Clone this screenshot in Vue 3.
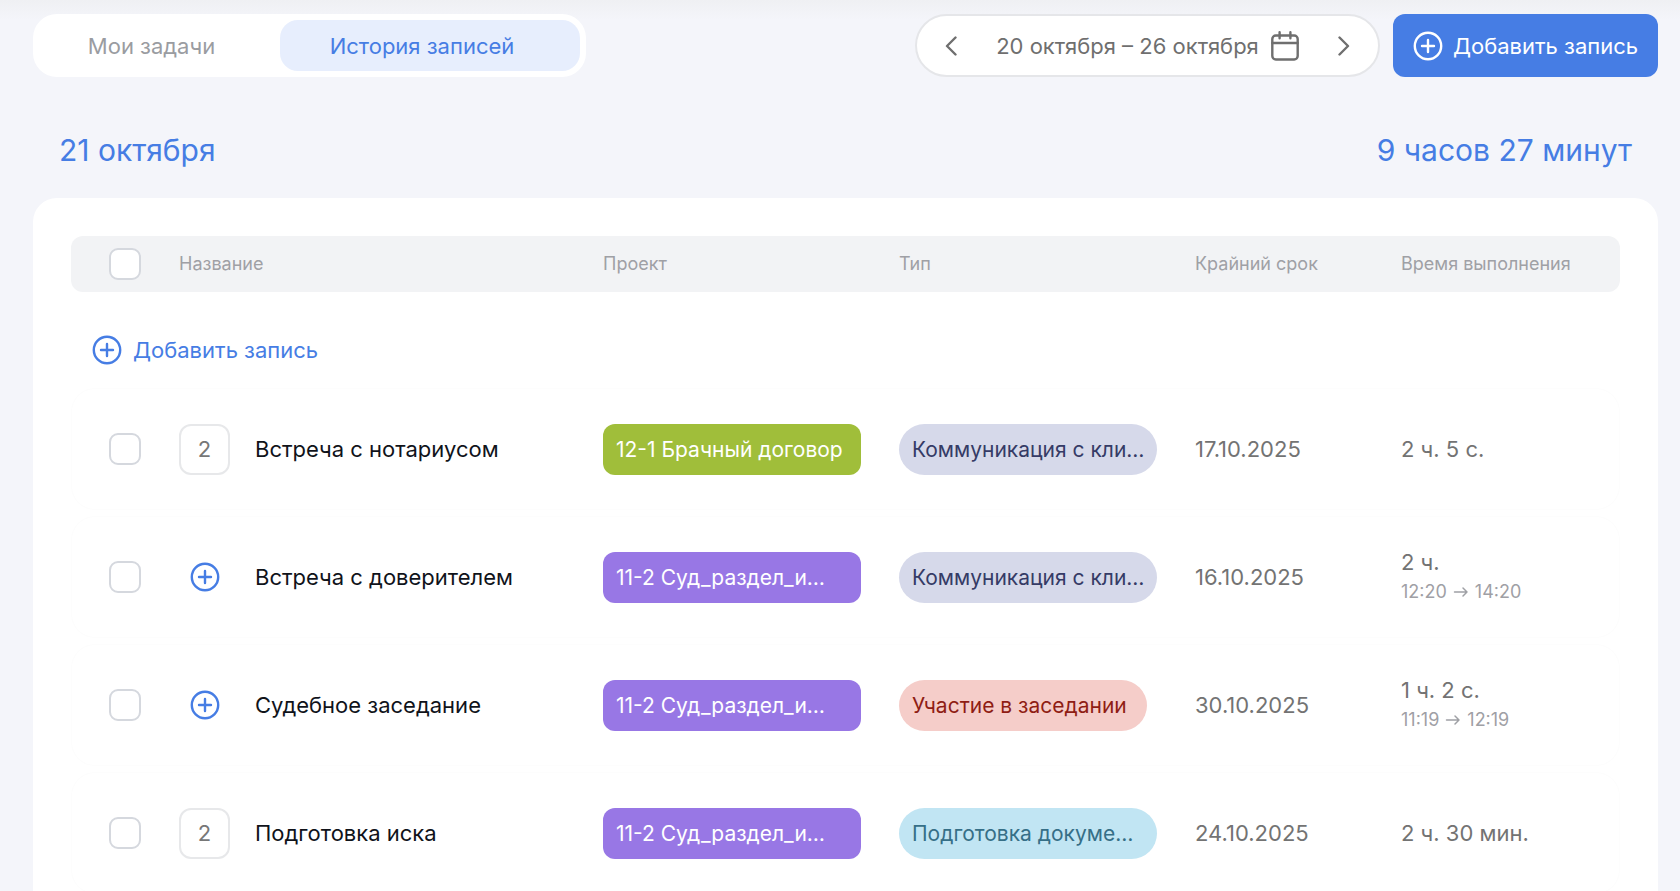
<script setup>
import { h } from 'vue'

const PlusCircle = () =>
  h('svg', { class: 'plus', viewBox: '0 0 30 30', width: 30, height: 30, fill: 'none', stroke: 'currentColor', 'stroke-width': 2.4, 'stroke-linecap': 'round', 'aria-hidden': 'true' }, [
    h('circle', { cx: 15, cy: 15, r: 13.2 }),
    h('path', { d: 'M15 9v12M9 15h12' })
  ])

const rows = [
  { id: 1, name: 'Встреча с нотариусом', count: 2, project: '12-1 Брачный договор', color: 'green', projectWide: true, type: 'Коммуникация с кли…', tone: 'indigo', typeWide: true, due: '17.10.2025', time: '2 ч. 5 с.' },
  { id: 2, name: 'Встреча с доверителем', project: '11-2 Суд_раздел_и…', color: 'violet', projectWide: true, type: 'Коммуникация с кли…', tone: 'indigo', typeWide: true, due: '16.10.2025', time: '2 ч.', from: '12:20', to: '14:20' },
  { id: 3, name: 'Судебное заседание', project: '11-2 Суд_раздел_и…', color: 'violet', projectWide: true, type: 'Участие в заседании', tone: 'red', due: '30.10.2025', time: '1 ч. 2 с.', from: '11:19', to: '12:19' },
  { id: 4, name: 'Подготовка иска', count: 2, project: '11-2 Суд_раздел_и…', color: 'violet', projectWide: true, type: 'Подготовка докуме…', tone: 'cyan', typeWide: true, due: '24.10.2025', time: '2 ч. 30 мин.' }
]
</script>

<template>
  <main class="page">
    <header class="toolbar">
      <nav class="tabs">
        <button type="button" class="tab">Мои задачи</button>
        <button type="button" class="tab active">История записей</button>
      </nav>
      <div class="actions">
        <div class="period">
          <button type="button" class="arrow" aria-label="Предыдущая неделя">
            <svg width="12" height="20" viewBox="0 0 12 20" fill="none" stroke="currentColor" stroke-width="2.4" stroke-linecap="round" stroke-linejoin="round"><path d="M10.5 1.5 2 10l8.500 8.500" /></svg>
          </button>
          <button type="button" class="range">
            <span>20 октября – 26 октября</span>
            <svg width="28" height="30" viewBox="0 0 28 30" fill="none" stroke="currentColor" stroke-width="2.4" stroke-linecap="round" stroke-linejoin="round"><rect x="1.300" y="4.500" width="25.400" height="24" rx="3.500" /><path d="M1.300 12h25.400M8.600 1.300v6M19.400 1.300v6" /></svg>
          </button>
          <button type="button" class="arrow" aria-label="Следующая неделя">
            <svg width="12" height="20" viewBox="0 0 12 20" fill="none" stroke="currentColor" stroke-width="2.4" stroke-linecap="round" stroke-linejoin="round"><path d="M1.500 1.500 10 10l-8.500 8.500" /></svg>
          </button>
        </div>
        <button type="button" class="primary"><PlusCircle />Добавить запись</button>
      </div>
    </header>

    <div class="day">
      <h2>21 октября</h2>
      <h2>9 часов 27 минут</h2>
    </div>

    <section class="card">
      <table>
        <colgroup>
          <col class="c-check"><col class="c-name"><col class="c-tag"><col class="c-tag"><col class="c-due"><col class="c-time">
        </colgroup>
        <thead>
          <tr>
            <th class="check"><input type="checkbox" aria-label="Выбрать все"></th>
            <th>Название</th>
            <th>Проект</th>
            <th>Тип</th>
            <th>Крайний срок</th>
            <th>Время выполнения</th>
          </tr>
        </thead>
        <tbody>
          <tr class="add-row">
            <td colspan="6"><button type="button" class="add"><PlusCircle />Добавить запись</button></td>
          </tr>
          <tr v-for="r in rows" :key="r.id" class="entry">
            <td class="check"><input type="checkbox" :aria-label="r.name"></td>
            <td>
              <div class="name">
                <button v-if="r.count" type="button" class="count">{{ r.count }}</button>
                <button v-else type="button" class="count bare" aria-label="Добавить"><PlusCircle /></button>
                <span>{{ r.name }}</span>
              </div>
            </td>
            <td><span class="tag" :class="[r.color, { wide: r.projectWide }]">{{ r.project }}</span></td>
            <td><span class="tag pill" :class="[r.tone, { wide: r.typeWide }]">{{ r.type }}</span></td>
            <td class="muted">{{ r.due }}</td>
            <td class="muted">
              <div>{{ r.time }}</div>
              <div v-if="r.from" class="span">
                {{ r.from }}
                <svg width="16" height="12" viewBox="0 0 16 12" fill="none" stroke="currentColor" stroke-width="1.500" stroke-linecap="round" stroke-linejoin="round"><path d="M1.500 6h12.500M10 2l4 4-4 4" /></svg>
                {{ r.to }}
              </div>
            </td>
          </tr>
        </tbody>
      </table>
    </section>
  </main>
</template>

<style>
body {
  margin: 0;
  background: #f4f5fa;
}
</style>

<style scoped>
.page {
  box-sizing: border-box;
  min-height: 100vh;
  padding: 14px 22px 0 33px;
  background: linear-gradient(#eff0f3, #f4f5fa 20px);
  font-family: Inter, "Noto Sans", sans-serif;
  font-size: 22px;
  line-height: 30px;
  color: #10131a;
}
button {
  border: 0;
  padding: 0;
  background: none;
  font: inherit;
  color: inherit;
  white-space: nowrap;
  cursor: pointer;
}
svg {
  display: block;
  flex: none;
}
.toolbar,
.actions,
.tabs,
.period,
.range,
.primary,
.add,
.name,
.day {
  display: flex;
  align-items: center;
}
.toolbar,
.day {
  justify-content: space-between;
}
.tabs {
  box-sizing: border-box;
  height: 63px;
  padding: 6px;
  border-radius: 24px;
  background: #fff;
}
.tab {
  box-sizing: border-box;
  height: 51px;
  width: 241px;
  padding-right: 16px;
  border-radius: 18px;
  color: #9a9ca1;
}
.tab.active {
  width: 300px;
  background: #e7eefd;
  color: #467de4;
}
.actions {
  gap: 13px;
}
.period {
  box-sizing: border-box;
  height: 63px;
  width: 465px;
  padding: 0 28px;
  justify-content: space-between;
  border: 2px solid #e5e6e9;
  border-radius: 32px;
  background: #fff;
  color: #6f6f6f;
}
.range {
  gap: 12px;
}
.primary {
  height: 63px;
  width: 265px;
  justify-content: center;
  gap: 10px;
  border-radius: 12px;
  background: #467de4;
  color: #fff;
}
.day {
  padding: 53px 26px 27px;
  color: #467de4;
}
.day h2 {
  margin: 0;
  font-size: 30px;
  line-height: 41px;
  font-weight: 400;
}
.card {
  padding: 32px 38px;
  border-radius: 24px;
  background: #fff;
}
table {
  width: 100%;
  table-layout: fixed;
  border-collapse: separate;
  border-spacing: 0 6px;
}
.c-check {
  width: 108px;
}
.c-tag {
  width: 296px;
}
.c-due {
  width: 206px;
}
.c-time {
  width: 219px;
}
th,
td {
  padding: 0;
  text-align: left;
  font-weight: 400;
}
th {
  height: 56px;
  background: #f2f3f5;
  font-size: 18px;
  color: #9fa0a5;
}
th:first-child {
  border-radius: 12px 0 0 12px;
}
th:last-child {
  border-radius: 0 12px 12px 0;
}
th.check {
  padding-left: 38px;
}
td.check {
  padding-left: 37px;
}
input {
  appearance: none;
  display: block;
  box-sizing: border-box;
  width: 32px;
  height: 32px;
  margin: 0;
  border: 2px solid #d5d8de;
  border-radius: 9px;
  background: #fff;
}
.add-row td {
  height: 64px;
  padding: 20px 0 0 21px;
}
.add {
  gap: 11px;
  color: #467de4;
}
.entry td {
  box-sizing: border-box;
  height: 122px;
  border: solid #fdfdfd;
  border-width: 1px 0;
}
.entry td:first-child {
  border-left-width: 1px;
  border-radius: 24px 0 0 24px;
}
.entry td:last-child {
  border-right-width: 1px;
  border-radius: 0 24px 24px 0;
}
.name {
  gap: 25px;
}
.count {
  display: grid;
  place-items: center;
  box-sizing: border-box;
  width: 51px;
  height: 51px;
  border: 2px solid #e7e8ea;
  border-radius: 12px;
  color: #777;
}
.count.bare {
  border-color: transparent;
  color: #467de4;
}
.tag {
  display: inline-block;
  box-sizing: border-box;
  height: 51px;
  min-width: 248px;
  max-width: 258px;
  padding: 0 13px;
  border-radius: 12px;
  font-size: 21px;
  line-height: 51px;
  white-space: nowrap;
  vertical-align: middle;
}
.tag.wide {
  width: 258px;
}
.tag.pill {
  border-radius: 26px;
}
.green {
  background: #a0be3a;
  color: #fff;
}
.violet {
  background: #9877e5;
  color: #fff;
}
.indigo {
  background: #d6d9ea;
  color: #353b66;
}
.red {
  background: #f5cdc9;
  color: #8f1d14;
}
.cyan {
  background: #c1e5f3;
  color: #366f87;
}
.muted {
  color: #737373;
}
.span {
  display: flex;
  align-items: center;
  gap: 6px;
  font-size: 18px;
  color: #9fa0a5;
}
</style>
